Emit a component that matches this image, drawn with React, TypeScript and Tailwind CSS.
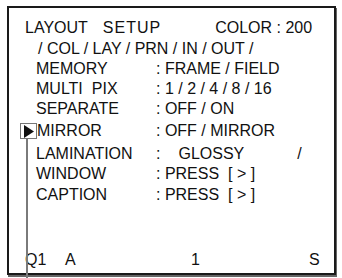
import React from "react";

const font = { fontFamily: '"Liberation Sans", Arial, sans-serif' };

function Row({ h, children, className = "" }: { h: string; children: React.ReactNode; className?: string }) {
  return <div className={`flex items-start leading-[20px] whitespace-pre ${h} ${className}`}>{children}</div>;
}

function Item({ label, value, extra }: { label: React.ReactNode; value: React.ReactNode; extra?: React.ReactNode }) {
  return (
    <>
      <div className="w-[120px] shrink-0 flex">{label}</div>
      <div className="flex">{value}</div>
      {extra}
    </>
  );
}

export default function App() {
  return (
    <div className="relative w-[342px] h-[278px] bg-white overflow-hidden text-[16px] text-[#111]" style={font}>
      <div className="ml-[7px] mt-[6px] w-[329px] h-[269px] border-2 border-[#1a1a1a] shadow-[1px_2px_0_#666] flex flex-col pt-[10px] pb-[3px]">
        <Row h="h-[21px]" className="pl-[16px]">
          <span>LAYOUT</span>
          <span className="ml-[15px] tracking-[1px]">SETUP</span>
          <span className="ml-[54px]">COLOR : 200</span>
        </Row>
        <Row h="h-[20px]" className="pl-[29px]">
          <span>/ COL / LAY / PRN / IN / OUT /</span>
        </Row>
        <Row h="h-[20px]" className="pl-[27px]">
          <Item label={<span>MEMORY</span>} value={<span>: FRAME / FIELD</span>} />
        </Row>
        <Row h="h-[20px]" className="pl-[27px]">
          <Item
            label={
              <>
                <span>MULTI</span>
                <span className="ml-[9px]">PIX</span>
              </>
            }
            value={<span>: 1 / 2 / 4 / 8 / 16</span>}
          />
        </Row>
        <Row h="h-[22px]" className="pl-[27px]">
          <Item label={<span>SEPARATE</span>} value={<span>: OFF / ON</span>} />
        </Row>
        <Row h="h-[23px]" className="pl-[11px]">
          <div className="w-[136px] shrink-0 flex items-start">
            <div className="mt-[2px] w-[17px] h-[16px] border-[1.5px] border-[#777] flex items-center justify-center shrink-0">
              <svg width="11" height="13" viewBox="0 0 11 13">
                <polygon points="1,0 11,6.5 1,13" fill="#111" />
              </svg>
            </div>
            <span>MIRROR</span>
          </div>
          <span>: OFF / MIRROR</span>
        </Row>
        <Row h="h-[20px]" className="pl-[27px]">
          <Item
            label={<span>LAMINATION</span>}
            value={
              <>
                <span>:</span>
                <span className="ml-[18px]">GLOSSY</span>
                <span className="ml-[53px]">/</span>
              </>
            }
          />
        </Row>
        <Row h="h-[21px]" className="pl-[27px]">
          <Item label={<span>WINDOW</span>} value={<span>: PRESS  [ &gt; ]</span>} />
        </Row>
        <Row h="h-[20px]" className="pl-[27px]">
          <Item label={<span>CAPTION</span>} value={<span>: PRESS  [ &gt; ]</span>} />
        </Row>
        <div className="flex-1" />
        <Row h="h-[20px]" className="pl-[16px]">
          <span className="w-[40px]">Q1</span>
          <span className="w-[126px]">A</span>
          <span className="w-[118px]">1</span>
          <span>S</span>
        </Row>
      </div>
      <div className="absolute left-[26px] top-[138px] w-[2px] h-[140px] bg-[#7a7a7a]" />
    </div>
  );
}
